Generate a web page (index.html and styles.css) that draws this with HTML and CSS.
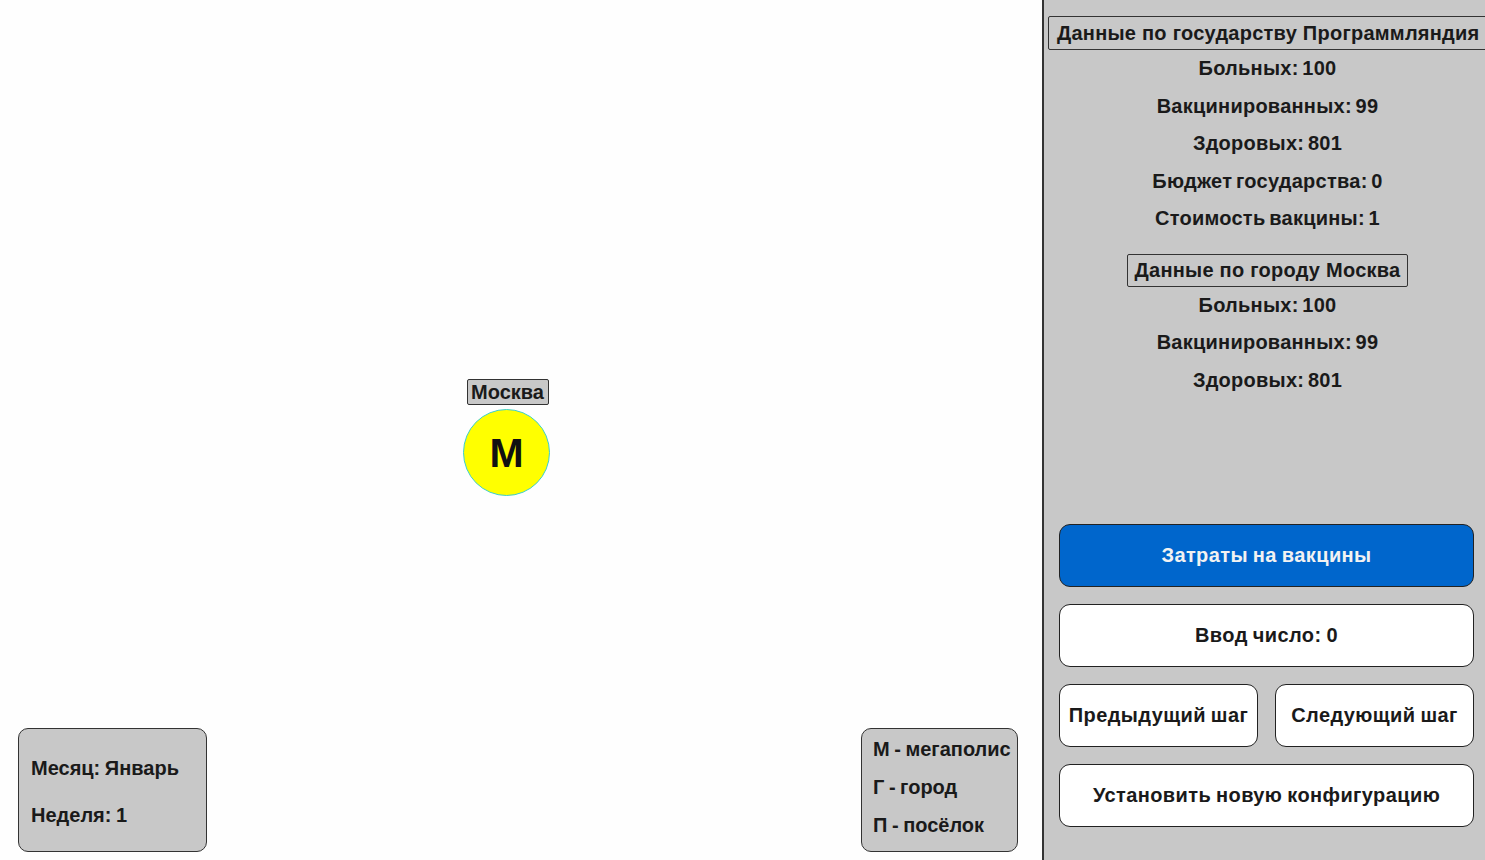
FILE: index.html
```html
<!DOCTYPE html>
<html lang="ru">
<head>
<meta charset="utf-8">
<title>Программляндия</title>
<link rel="stylesheet" href="styles.css">
</head>
<body>
<div class="app">
  <main class="map">
    <div class="city">
      <div class="city-label">Москва</div>
      <div class="city-node">М</div>
    </div>
    <div class="date-box">
      <div>Месяц: Январь</div>
      <div>Неделя: 1</div>
    </div>
    <div class="legend">
      <div>М - мегаполис</div>
      <div>Г - город</div>
      <div>П - посёлок</div>
    </div>
  </main>
  <aside class="panel">
    <div class="stats">
      <div class="title title-wide">Данные по государству Программляндия</div>
      <div class="row">Больных: 100</div>
      <div class="row">Вакцинированных: 99</div>
      <div class="row">Здоровых: 801</div>
      <div class="row">Бюджет государства: 0</div>
      <div class="row">Стоимость вакцины: 1</div>
      <div class="title title-city">Данные по городу Москва</div>
      <div class="row">Больных: 100</div>
      <div class="row">Вакцинированных: 99</div>
      <div class="row">Здоровых: 801</div>
    </div>
    <div class="buttons">
      <button class="btn btn-blue">Затраты на вакцины</button>
      <button class="btn">Ввод число: 0</button>
      <div class="btn-pair">
        <button class="btn">Предыдущий шаг</button>
        <button class="btn">Следующий шаг</button>
      </div>
      <button class="btn">Установить новую конфигурацию</button>
    </div>
  </aside>
</div>
</body>
</html>
```
FILE: styles.css
```css
html, body {
  margin: 0;
  padding: 0;
  height: 100%;
  background: #fefefe;
  font-family: "Liberation Sans", Arial, sans-serif;
  font-weight: bold;
  color: #1a1a1a;
  overflow: hidden;
}
.app {
  display: flex;
  height: 860px;
  width: 1485px;
}
.map {
  position: relative;
  flex: 0 0 1042px;
  background: #fefefe;
}
.city {
  position: absolute;
  left: 463px;
  top: 379px;
  width: 87px;
  display: flex;
  flex-direction: column;
  align-items: center;
  gap: 4px;
}
.city-label {
  background: #c8c8c8;
  border: 1px solid #333;
  border-radius: 2px;
  font-size: 20px;
  line-height: 24px;
  padding: 0 4px 0 3px;
  margin-left: 3px;
}
.city-node {
  width: 87px;
  height: 87px;
  border-radius: 50%;
  background: #ffff00;
  border: 1px solid #3ccfcf;
  box-sizing: border-box;
  display: flex;
  align-items: center;
  justify-content: center;
  font-size: 41px;
  color: #111;
  padding-top: 1px;
}
.date-box, .legend {
  position: absolute;
  top: 728px;
  height: 124px;
  box-sizing: border-box;
  background: #c8c8c8;
  border: 1px solid #333;
  border-radius: 10px;
  display: flex;
  flex-direction: column;
  font-size: 20px;
  line-height: 24px;
  word-spacing: -1px;
}
.date-box {
  left: 18px;
  width: 189px;
  padding: 27px 0 0 12px;
  gap: 23px;
}
.legend {
  left: 861px;
  width: 157px;
  padding: 8px 0 0 11px;
  gap: 14px;
}
.panel {
  flex: 1;
  background: #c8c8c8;
  border-left: 2px solid #333;
  display: flex;
  flex-direction: column;
  justify-content: space-between;
  box-sizing: border-box;
  overflow: hidden;
}
.stats {
  display: flex;
  flex-direction: column;
  align-items: center;
  padding: 16px 0 0 6px;
  font-size: 20px;
  letter-spacing: 0.25px;
  word-spacing: -2px;
}
.title {
  border: 1px solid #333;
  border-radius: 2px;
  line-height: 31px;
  padding: 0 7px;
  white-space: nowrap;
  word-spacing: 0;
}
.title-wide {
  align-self: flex-start;
  margin-left: -2px;
  padding: 0 8px;
  line-height: 32px;
}
.title-city {
  margin-top: 16px;
}
.row {
  line-height: 37.5px;
}
.buttons {
  display: flex;
  flex-direction: column;
  gap: 17px;
  padding: 0 11px 33px 15px;
}
.btn {
  height: 63px;
  border: 1px solid #222;
  border-radius: 11px;
  background: #fff;
  font-family: inherit;
  font-weight: bold;
  font-size: 20px;
  letter-spacing: 0.4px;
  word-spacing: -1px;
  color: #1a1a1a;
  padding: 0;
  white-space: nowrap;
}
.btn-blue {
  background: #0066cc;
  color: #f2f2f2;
}
.btn-pair {
  display: flex;
  gap: 17px;
}
.btn-pair .btn {
  flex: 1;
}
```
